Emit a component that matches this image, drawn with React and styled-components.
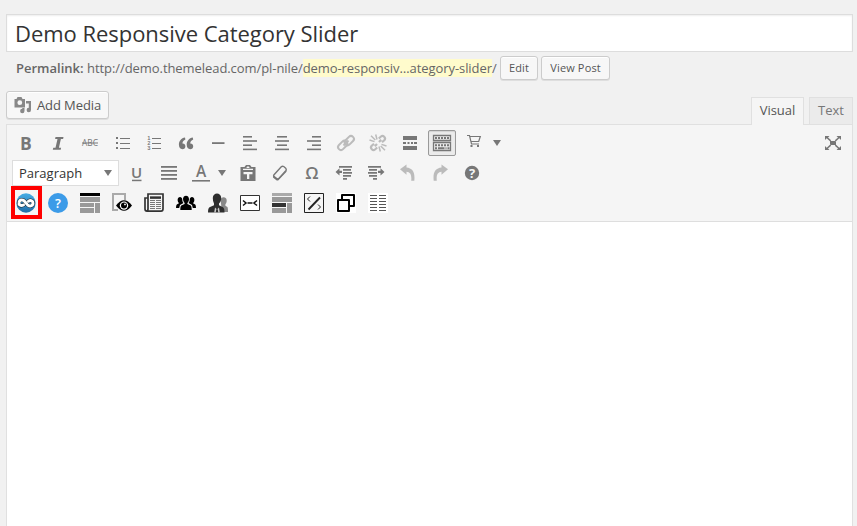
import React from "react";
import styled, { createGlobalStyle, css } from "styled-components";

const GlobalStyle = createGlobalStyle`
  * { box-sizing: border-box; }
  body { margin: 0; background: #f1f1f1; overflow: hidden; }
`;

const Page = styled.main`
  height: 526px;
  padding: 14px 4px 0 6px;
  display: flex;
  flex-direction: column;
  background: #f1f1f1;
  color: #666;
  font: 13px/18px "Open Sans", sans-serif;
`;

const TitleField = styled.h1`
  flex: none;
  height: 38px;
  margin: 0;
  padding: 0 8px;
  border: 1px solid #ddd;
  background: #fff;
  box-shadow: inset 0 1px 2px rgba(0, 0, 0, 0.07);
  color: #333;
  font-size: 22px;
  letter-spacing: -0.04px;
  line-height: 36px;
  font-weight: 400;
  white-space: nowrap;
`;

const Permalink = styled.div`
  display: flex;
  align-items: center;
  height: 24px;
  margin-top: 4px;
  padding-left: 10px;
  white-space: nowrap;

  strong { font-weight: 600; margin-right: 3.5px; }
  span { width: 410px; letter-spacing: -0.07px; }
  mark { color: inherit; background: #fffbcc; }
`;

const Button = styled.button`
  display: flex;
  align-items: center;
  justify-content: center;
  flex: none;
  width: ${(p) => p.$width}px;
  height: ${(p) => (p.$large ? 28 : 24)}px;
  margin-left: ${(p) => p.$gap || 0}px;
  padding: 0 0 1px;
  border: 1px solid #ccc;
  border-radius: 3px;
  background: #f7f7f7;
  box-shadow: inset 0 1px 0 #fff, 0 1px 0 rgba(0, 0, 0, 0.08);
  color: #555;
  font: ${(p) => (p.$large ? "13px" : "11px")} "Open Sans", sans-serif;
  letter-spacing: ${(p) => (p.$large ? -0.08 : 0.14)}px;
  white-space: nowrap;
`;

const EditorHead = styled.div`
  display: flex;
  justify-content: space-between;
  height: 33px;
  margin-top: 11px;

  ${Button} svg { margin-right: 5px; }
`;

const Tabs = styled.div`
  display: flex;
  gap: 5px;
  height: 28px;
  margin-top: 6px;
  position: relative;
`;

const Tab = styled.div`
  width: ${(p) => p.$width}px;
  height: ${(p) => (p.$active ? 28 : 27)}px;
  border: 1px solid #e0e0e0;
  border-bottom: 0;
  background: ${(p) => (p.$active ? "#f5f5f5" : "#ebebeb")};
  color: ${(p) => (p.$active ? "#555" : "#777")};
  text-align: center;
  line-height: 25px;
`;

const Editor = styled.section`
  flex: 1;
  display: flex;
  flex-direction: column;
  border: 1px solid #e0e0e0;
  border-bottom: 0;
  background: #fff;
`;

const Toolbar = styled.div`
  height: 97px;
  padding: 3px 5px;
  border-bottom: 1px solid #dedede;
  background: #f5f5f5;
`;

const Row = styled.div`
  display: flex;
  align-items: center;
  height: 30px;
  color: #777;
`;

const Tool = styled.div`
  display: flex;
  align-items: center;
  justify-content: center;
  flex: none;
  width: 28px;
  height: 26px;
  margin-right: ${(p) => (p.$gap === undefined ? 4 : p.$gap)}px;
  margin-left: ${(p) => p.$before || 0}px;
  opacity: ${(p) => (p.$disabled ? 0.45 : 1)};
  ${(p) => p.$pressed && css`
    border: 1px solid #999;
    border-radius: 2px;
    background: #ebebeb;
    box-shadow: inset 0 1px 1px rgba(0, 0, 0, 0.1);
  `}
`;

const Highlighted = styled(Tool)`
  width: 31px;
  height: 33px;
  margin: -1px 2px 0 -1px;
  padding: 1px 1px 0 0;
  border: 4px solid #f00;
`;

const PushRight = styled.div`
  margin-left: auto;
  width: 28px;
  display: flex;
  justify-content: center;
`;

const Select = styled.div`
  display: flex;
  align-items: center;
  justify-content: space-between;
  flex: none;
  width: 107px;
  height: 26px;
  padding: 0 6px;
  border: 1px solid #ddd;
  background: #fff;
  color: #333;

  svg { color: #777; }
`;

const Glyph = styled.svg`
  display: block;
  flex: none;
  overflow: visible;
`;

function Icon({ children, w = 20, h = 20, ...rest }) {
  return (
    <Glyph width={w} height={h} viewBox={`0 0 ${w} ${h}`} fill="currentColor" {...rest}>
      {children}
    </Glyph>
  );
}

const sans = '"Open Sans", sans-serif';

function Letter({ x = 10, y = 16, size = 16, children, ...rest }) {
  return (
    <text x={x} y={y} fontSize={size} textAnchor="middle" fontFamily={sans} {...rest}>
      {children}
    </text>
  );
}

const Arrow = () => <Icon w={8} h={6}><path d="M0 0h8L4 6z" /></Icon>;

const Bold = () => <Icon><Letter y={16.5} size={17.5} fontWeight="700">B</Letter></Icon>;
const Italic = () => (
  <Icon><path d="M7.500 4h8l-.4 2h-2.200l-2 8.800h2.200l-.4 2H4.800l.5-2h2.200l2-8.800H7.100z" /></Icon>
);
const Strike = () => (
  <Icon>
    <Letter y={13} size={8.3} textLength="16" lengthAdjust="spacingAndGlyphs">ABC</Letter>
    <path d="M2 9.500h16v1H2z" />
  </Icon>
);
const Bullets = () => (
  <Icon><path d="M4 4h2v2H4zm0 5h2v2H4zm0 5h2v2H4zM8 5h10v1H8zm0 5h10v1H8zm0 5h10v1H8z" /></Icon>
);
const Numbers = () => (
  <Icon>
    <path d="M8 5h9v1H8zm0 5h9v1H8zm0 5h9v1H8z" />
    {[1, 2, 3].map((n) => (
      <Letter key={n} x={5} y={2.2 + n * 5} size={5} fontFamily="Liberation Sans, sans-serif" stroke="currentColor" strokeWidth=".2">{n}</Letter>
    ))}
  </Icon>
);
const Quote = () => (
  <Icon>
    <path d="M9 4.400C5.300 5 2.900 7.800 2.900 11.500c0 2.900 1.400 4.700 3.500 4.700 1.800 0 3-1.200 3-3 0-1.700-1.100-2.800-2.700-2.800h-.3C6.600 8.700 7.700 7.300 9.400 6.600z" />
    <path d="M16.800 4.400c-3.700.6-6.100 3.400-6.100 7.100 0 2.900 1.400 4.700 3.500 4.700 1.800 0 3-1.200 3-3 0-1.700-1.100-2.800-2.700-2.800h-.3c.2-1.700 1.300-3.100 3-3.800z" />
  </Icon>
);
const Rule = () => <Icon><path d="M4 9.200h12.500v1.800H4z" /></Icon>;

const alignments = {
  left: [[3, 9], [3, 14], [3, 9], [3, 14]],
  center: [[5, 10], [3, 14], [5, 10], [3, 14]],
  right: [[8, 9], [3, 14], [8, 9], [3, 14]],
};
const Align = ({ side }) => (
  <Icon>
    {alignments[side].map(([x, w], i) => (
      <rect key={i} x={x} y={3 + i * 4.2} width={w} height="1.6" />
    ))}
  </Icon>
);
const Justify = () => (
  <Icon>{[3, 7, 11, 15].map((y) => <rect key={y} x="2" y={y} width="16" height="1.8" />)}</Icon>
);
const LinkIcon = () => (
  <Icon fill="none" stroke="currentColor" strokeWidth="2">
    <rect x="8" y="4.700" width="10.600" height="5.800" rx="2.900" transform="rotate(-45 13.300 7.600)" />
    <rect x="1.400" y="9.500" width="10.600" height="5.800" rx="2.900" transform="rotate(-45 6.700 12.400)" />
    <path d="M7.500 12.500l5-5" />
  </Icon>
);
const Unlink = () => (
  <Icon fill="none" stroke="currentColor" strokeWidth="2.200">
    <path d="M10.800 5.500 13 3.500q1.600-1.300 3.200.3t.3 3.200L14 9.300M9.200 14.500 7 16.500q-1.600 1.300-3.200-.3t-.3-3.200L6 10.700M11 9l2.200-2.200M9 11l-2.200 2.200" />
    <path strokeWidth="1.500" d="M1.500 7l5 1.600M3 2.700l4.300 4.300M7.700 1.500 9 6.500M18.500 13l-5-1.600M17 17.300 12.700 13M12.300 18.500 11 13.500" />
  </Icon>
);
const More = () => (
  <Icon><path d="M3 3h14v4H3zm0 6h3v2H3zm4.500 0h2v2h-2zm3.500 0h2v2h-2zm3 0h3v2h-3zM3 13h14v4H3z" /></Icon>
);
const Keyboard = () => (
  <Icon fill="none" stroke="currentColor">
    <path strokeWidth="1.300" d="M1.500 2.500h17v5h-17zM1.500 9.500h17v8h-17z" />
    <path strokeWidth="2" strokeDasharray="2 1" d="M3 5h14M3 12.200h14" />
    <path strokeWidth="2" d="M3 15.200h2m1 0h6.500m1 0h1m1 0h2" />
  </Icon>
);
const Cart = () => (
  <Icon>
    <path d="M3 2.500h2.500l2 8.500H15M6.300 3.500h10L14.700 8.500H7.200" fill="none" stroke="currentColor" strokeWidth="1.200" />
    <path d="M6.500 12h2v2h-2zm6.500 0h2v2h-2z" />
  </Icon>
);
const Expand = () => (
  <Icon>
    <path d="M2 3h4.500L5 4.500 8.200 7.300l-1 1.100L3.700 5.300 2 7zM18 3h-4.500L15 4.500l-3.200 2.800 1 1.100 3.500-3.100L18 7zM2 17h4.500L5 15.500l3.200-2.800-1-1.100-3.500 3.100L2 13zM18 17h-4.500l1.500-1.500-3.200-2.800 1-1.100 3.500 3.100L18 13zM7 8h6v4H7z" />
  </Icon>
);

const Underline = () => <Icon><Letter x={9.6} y={15} size={15} fontWeight="600">U</Letter><path d="M5 16.700h9.500V18.200H5z" /></Icon>;
const TextColor = () => (
  <Icon><Letter y={14} size={15.5} fontWeight="600">A</Letter><path d="M1 17h18v1.600H1z" /></Icon>
);
const Paste = () => (
  <Icon>
    <path fillRule="evenodd" d="M6.500 4 8 2h4l1.500 2h4v14h-15V4zm1.900 1h3.200L11 3.600H9zM5 7h10V5.800H5zm.5 2v2.300H9V16h2.300v-4.700h3.200V9z" />
  </Icon>
);
const Eraser = () => (
  <Icon>
    <path d="M3.800 12 11.500 3.600q1-.8 2.200-.1l2 1.700q1 1 .3 2.200L8.600 15.600q-.9.800-1.900.1L4 13.600q-.7-.7-.2-1.600z" fill="none" stroke="currentColor" strokeWidth="1.400" />
    <path d="M3.200 12.300 8.300 16l8.200-9v1.800L8.200 17.600H6.700L3 14.600z" />
  </Icon>
);
const Omega = () => <Icon><Letter y={16} size={17} fontWeight="600">Ω</Letter></Icon>;
const Indent = ({ out }) => (
  <Icon>
    <g transform={out ? undefined : "translate(20 0) scale(-1 1)"}>
      <path d="M5 3h13v1.800H5zm4 3h8v1.800H9zM9 9h9v1.800H9zm0 3h8v1.800H9zm0 3h4v1.800H9zM1.500 8.900 5.500 5.200v2.500H8v2.400H5.500v2.500z" />
    </g>
  </Icon>
);
const Undo = ({ flip }) => (
  <Icon>
    <g transform={flip ? "translate(20 0) scale(-1 1)" : undefined}>
      <path d="M2 6.300 8.500 1.500v3c6 .6 8.700 4.500 7.800 13.200h-3.100c.6-5.700-.7-8.600-4.700-9v3z" />
    </g>
  </Icon>
);
const Help = () => (
  <Icon><circle cx="10" cy="10" r="7.200" /><Letter y={14.6} size={13} fontWeight="700" fill="#f5f5f5">?</Letter></Icon>
);

const wave = "M7.500 12C4.500 13.500 2.500 11.500 3 9.500 3.600 6.500 7 6.300 9 8.800L11.300 11.600C13.300 14 16.700 13 17 10.300 17.200 7.800 14.800 6.800 12.500 8.200";
const Shortcode = () => (
  <Icon>
    <defs>
      <linearGradient id="blue" x1="0" y1="0" x2="0" y2="1">
        <stop stopColor="#45ace4" /><stop offset="1" stopColor="#216da7" />
      </linearGradient>
    </defs>
    <circle cx="10" cy="10" r="9.700" fill="url(#blue)" />
    <g fill="none" strokeLinecap="round">
      <path d={wave} stroke="#16212a" strokeWidth="4" />
      <path d={wave} stroke="#fff" strokeWidth="3" />
    </g>
  </Icon>
);
const BlueHelp = () => (
  <Icon><circle cx="10" cy="10" r="10" fill="#3c9be8" /><Letter y={14.8} size={13} fontWeight="600" fill="#fff">?</Letter></Icon>
);
const Blocks = () => (
  <Icon>
    <path fill="#000" d="M0 0h20v3H0z" />
    <path fill="#999" d="M0 4h20v5H0zm0 6h14v4H0zm0 5h14v5H0zm15-5h5v10h-5z" />
  </Icon>
);
const BlocksMiddle = () => (
  <Icon>
    <path fill="#aaa" d="M0 0h20v3H0z" />
    <path fill="#999" d="M0 4h20v5H0zm0 11h14v5H0zm15-5h5v10h-5z" />
    <path fill="#333" d="M0 10h14v4H0z" />
  </Icon>
);
const Preview = () => (
  <Icon>
    <path fill="none" stroke="#aaa" strokeWidth="2" d="M13 7V1H1v16h5" />
    <path fill="#000" d="M4 12.500Q12 2 20 12.500 12 23 4 12.500z" />
    <circle cx="12" cy="12.600" r="4.200" fill="#fff" /><circle cx="12" cy="12.600" r="3" fill="#000" />
    <circle cx="13" cy="11.400" r=".9" fill="#fff" />
  </Icon>
);
const News = () => (
  <Icon fill="none" stroke="#333">
    <path strokeWidth="1.700" d="M4 5H1v11q0 2.200 2 2.200h14q2 0 2-2.200V1H4v15q0 2-1.500 2" />
    <path strokeWidth="2.500" d="M6 4.600h11" />
    <path stroke="#777" d="M6 7.500h5m1 0h5M6 9.500h5m1 0h5M6 11.500h5m1 0h5M6 13.500h5m1 0h5M6 15.500h5m1 0h5" />
  </Icon>
);
const Team = () => (
  <Icon fill="#000">
    <path d="M7 6c0-4.500 6-4.500 6 0 0 1.800-.6 3-1.600 3.900v1.200l3.300 1.400q1 .6 1 4.500H4.300q0-3.900 1-4.500l3.300-1.400V9.900Q7 8.500 7 6z" />
    <path d="M1.600 7c0-4 4.700-4 4.700-.3 0 1.700.6 2.600 1.200 3.300L4 12l-.8 3H0q0-3 .8-3.600L3 10.200Q1.600 9 1.600 7zM18.400 7c0-4-4.700-4-4.700-.3 0 1.700-.6 2.600-1.200 3.300L16 12l.8 3H20q0-3-.8-3.600L17 10.200q1.400-1.200 1.400-3.200z" />
  </Icon>
);
const People = () => (
  <Icon>
    <path fill="#888" d="M12.500 6.500q1-2.500 3.500-2.200 3 .4 2.700 4-.2 2-1.300 3v1.500l2 1.100q.6.600.6 5.100h-6z" />
    <path fill="#2d2d2d" d="M4.800 5c0-6 8.400-6 8.400 0 0 2.700-.8 4.200-2.200 5.500v1.700l4 2q1.500.8 1.500 5.300H0q0-4.500 1.500-5.300l4.500-2v-1.700Q4.800 8.500 4.800 5z" />
    <path fill="#ccc" d="M7 14.500 9 16.500l2-2 .8 5H10.300l-.6-3.200H8.300l-.6 3.200H6.200z" />
  </Icon>
);
const Divider = () => (
  <Icon>
    <path d="M.5 2.500h19v15H.5z" fill="#fff" stroke="#333" />
    <path d="M3 7.500 6 10l-3 2.500M17 7.500 14 10l3 2.500M7.500 10h5" fill="none" stroke="#111" strokeWidth="1.500" />
  </Icon>
);
const Code = () => (
  <Icon fill="none" stroke="#222">
    <path d="M.5.5h19v19H.5z" />
    <path strokeWidth="1.900" d="M4.500 16.500 16 4.500" />
    <path d="M6 3.500 3.500 6 6 8.500M14 11.500l2.500 2.500-2.500 2.500" />
  </Icon>
);
const Copies = () => (
  <Icon>
    <path fill="#fff" d="M0 0h20v20H0z" />
    <path fill="none" stroke="#000" strokeWidth="2" strokeLinejoin="round" d="M6 6V2h12v11h-4M2 7h11v11H2z" />
  </Icon>
);
const Columns = () => (
  <Icon>
    <path fill="#fff" d="M0 0h20v20H0z" />
    <path stroke="#555" d="M2 2.500h7m2 0h7m-16 3h7m2 0h7m-16 3h7m2 0h7m-16 3h7m2 0h7m-16 3h7m2 0h7m-16 3h7m2 0h7" />
  </Icon>
);
const MediaIcon = () => (
  <Icon w={18} h={18} fill="#888">
    <path fillRule="evenodd" d="M.5 3h2l1-2h4l1 2h2.500v8.500H.5zm5.300 1.300a2.400 2.400 0 1 0 0 4.800 2.400 2.400 0 0 0 0-4.800z" />
    <path d="M12 5h5v9a2.200 2.200 0 1 1-2.200-2.200V7.500H12zM10.500 12v3a2.200 2.200 0 1 1-2.200-2.200V12z" />
  </Icon>
);

export default function App() {
  return (
    <>
      <GlobalStyle />
      <Page>
        <TitleField>Demo Responsive Category Slider</TitleField>
        <Permalink>
          <strong>Permalink:</strong>
          <span>http://demo.themelead.com/pl-nile/<mark>demo-responsiv…ategory-slider</mark>/</span>
          <Button $width={38} $gap={3}>Edit</Button>
          <Button $width={69} $gap={3}>View Post</Button>
        </Permalink>
        <EditorHead>
          <Button $width={103} $large><MediaIcon />Add Media</Button>
          <Tabs>
            <Tab $width={53} $active>Visual</Tab>
            <Tab $width={44}>Text</Tab>
          </Tabs>
        </EditorHead>
        <Editor>
          <Toolbar>
            <Row>
              <Tool><Bold /></Tool>
              <Tool><Italic /></Tool>
              <Tool><Strike /></Tool>
              <Tool><Bullets /></Tool>
              <Tool><Numbers /></Tool>
              <Tool><Quote /></Tool>
              <Tool><Rule /></Tool>
              <Tool><Align side="left" /></Tool>
              <Tool><Align side="center" /></Tool>
              <Tool><Align side="right" /></Tool>
              <Tool $disabled><LinkIcon /></Tool>
              <Tool $disabled><Unlink /></Tool>
              <Tool><More /></Tool>
              <Tool $pressed><Keyboard /></Tool>
              <Tool $gap={5}><Cart /></Tool>
              <Arrow />
              <PushRight><Expand /></PushRight>
            </Row>
            <Row>
              <Select>Paragraph<Arrow /></Select>
              <Tool $before={4}><Underline /></Tool>
              <Tool><Justify /></Tool>
              <Tool $gap={3}><TextColor /></Tool>
              <Arrow />
              <Tool $before={8}><Paste /></Tool>
              <Tool><Eraser /></Tool>
              <Tool><Omega /></Tool>
              <Tool><Indent out /></Tool>
              <Tool><Indent /></Tool>
              <Tool $disabled><Undo /></Tool>
              <Tool $disabled><Undo flip /></Tool>
              <Tool><Help /></Tool>
            </Row>
            <Row>
              <Highlighted><Shortcode /></Highlighted>
              <Tool><BlueHelp /></Tool>
              <Tool><Blocks /></Tool>
              <Tool><Preview /></Tool>
              <Tool><News /></Tool>
              <Tool><Team /></Tool>
              <Tool><People /></Tool>
              <Tool><Divider /></Tool>
              <Tool><BlocksMiddle /></Tool>
              <Tool><Code /></Tool>
              <Tool><Copies /></Tool>
              <Tool><Columns /></Tool>
            </Row>
          </Toolbar>
        </Editor>
      </Page>
    </>
  );
}
